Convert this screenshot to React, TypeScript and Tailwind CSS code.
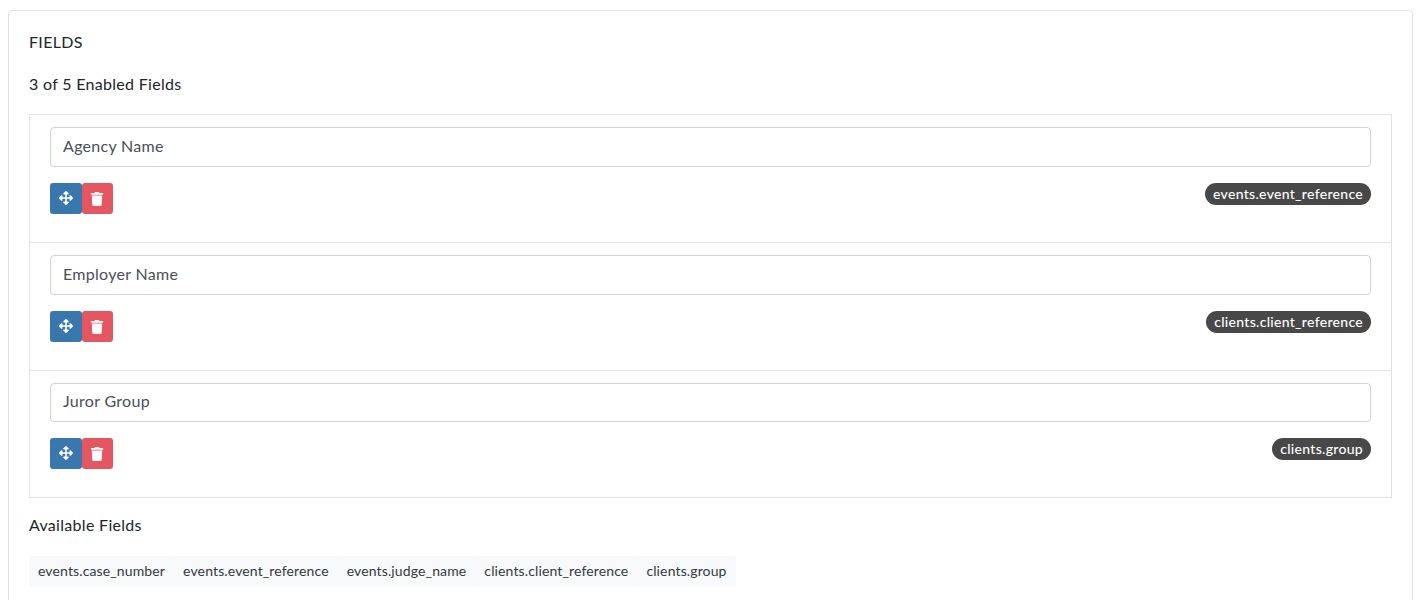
import { FaArrowsAlt, FaTrash } from 'react-icons/fa'

const enabled = [
  { label: 'Agency Name', field: 'events.event_reference', h: 'h-[127px]', input: 'h-[40px]' },
  { label: 'Employer Name', field: 'clients.client_reference', h: 'h-[128px]', input: 'h-[40px]' },
  { label: 'Juror Group', field: 'clients.group', h: 'h-[127px]', input: 'h-[39px]' },
]

const available = [
  'events.case_number',
  'events.event_reference',
  'events.judge_name',
  'clients.client_reference',
  'clients.group',
]

export default function App() {
  return (
    <div className="h-[600px] overflow-hidden bg-white pt-[10px] pl-[8px] pr-[5px] font-['Lato',sans-serif] text-[16px] tracking-[0.3px] text-[#212529]">
      <div className="h-[640px] border border-[#dfe1e4] rounded-[4px] px-[20px] pt-[20px]">
        <div className="h-[22px] leading-[22px]">FIELDS</div>
        <div className="mt-[20px] h-[22px] leading-[22px]">3 of 5 Enabled Fields</div>

        <div className="mt-[19px] border border-[#dfe1e4]">
          {enabled.map((row, i) => (
            <div key={row.field} className={`${row.h} px-[20px] pt-[12px] ${i > 0 ? 'border-t border-[#dfe1e4]' : ''}`}>
              <div className={`${row.input} flex items-center pb-[3px] px-[12px] border border-[#ced4da] rounded-[4px] text-[#495057]`}>
                {row.label}
              </div>
              <div className="mt-[16px] flex items-start justify-between">
                <div className="flex">
                  <button className="w-[32px] h-[31px] pb-[1px] flex items-center justify-center bg-[#3a77ad] text-white rounded-[3px]">
                    <FaArrowsAlt size={14} />
                  </button>
                  <button className="w-[31px] h-[31px] pr-[1px] flex items-center justify-center bg-[#e55760] text-white rounded-[3px]">
                    <FaTrash size={14} />
                  </button>
                </div>
                <span className="h-[22px] leading-[22px] px-[8px] rounded-full bg-[#484848] text-white text-[14px] tracking-[0.3px] font-medium">
                  {row.field}
                </span>
              </div>
            </div>
          ))}
        </div>

        <div className="mt-[16px] h-[22px] leading-[22px]">Available Fields</div>
        <div className="mt-[20px] flex">
          {available.map((f) => (
            <span key={f} className="h-[31px] leading-[29px] px-[9px] bg-[#f8f9fa] rounded-[3px] text-[14px] tracking-[0.13px] text-[#343a40]">
              {f}
            </span>
          ))}
        </div>
      </div>
    </div>
  )
}
